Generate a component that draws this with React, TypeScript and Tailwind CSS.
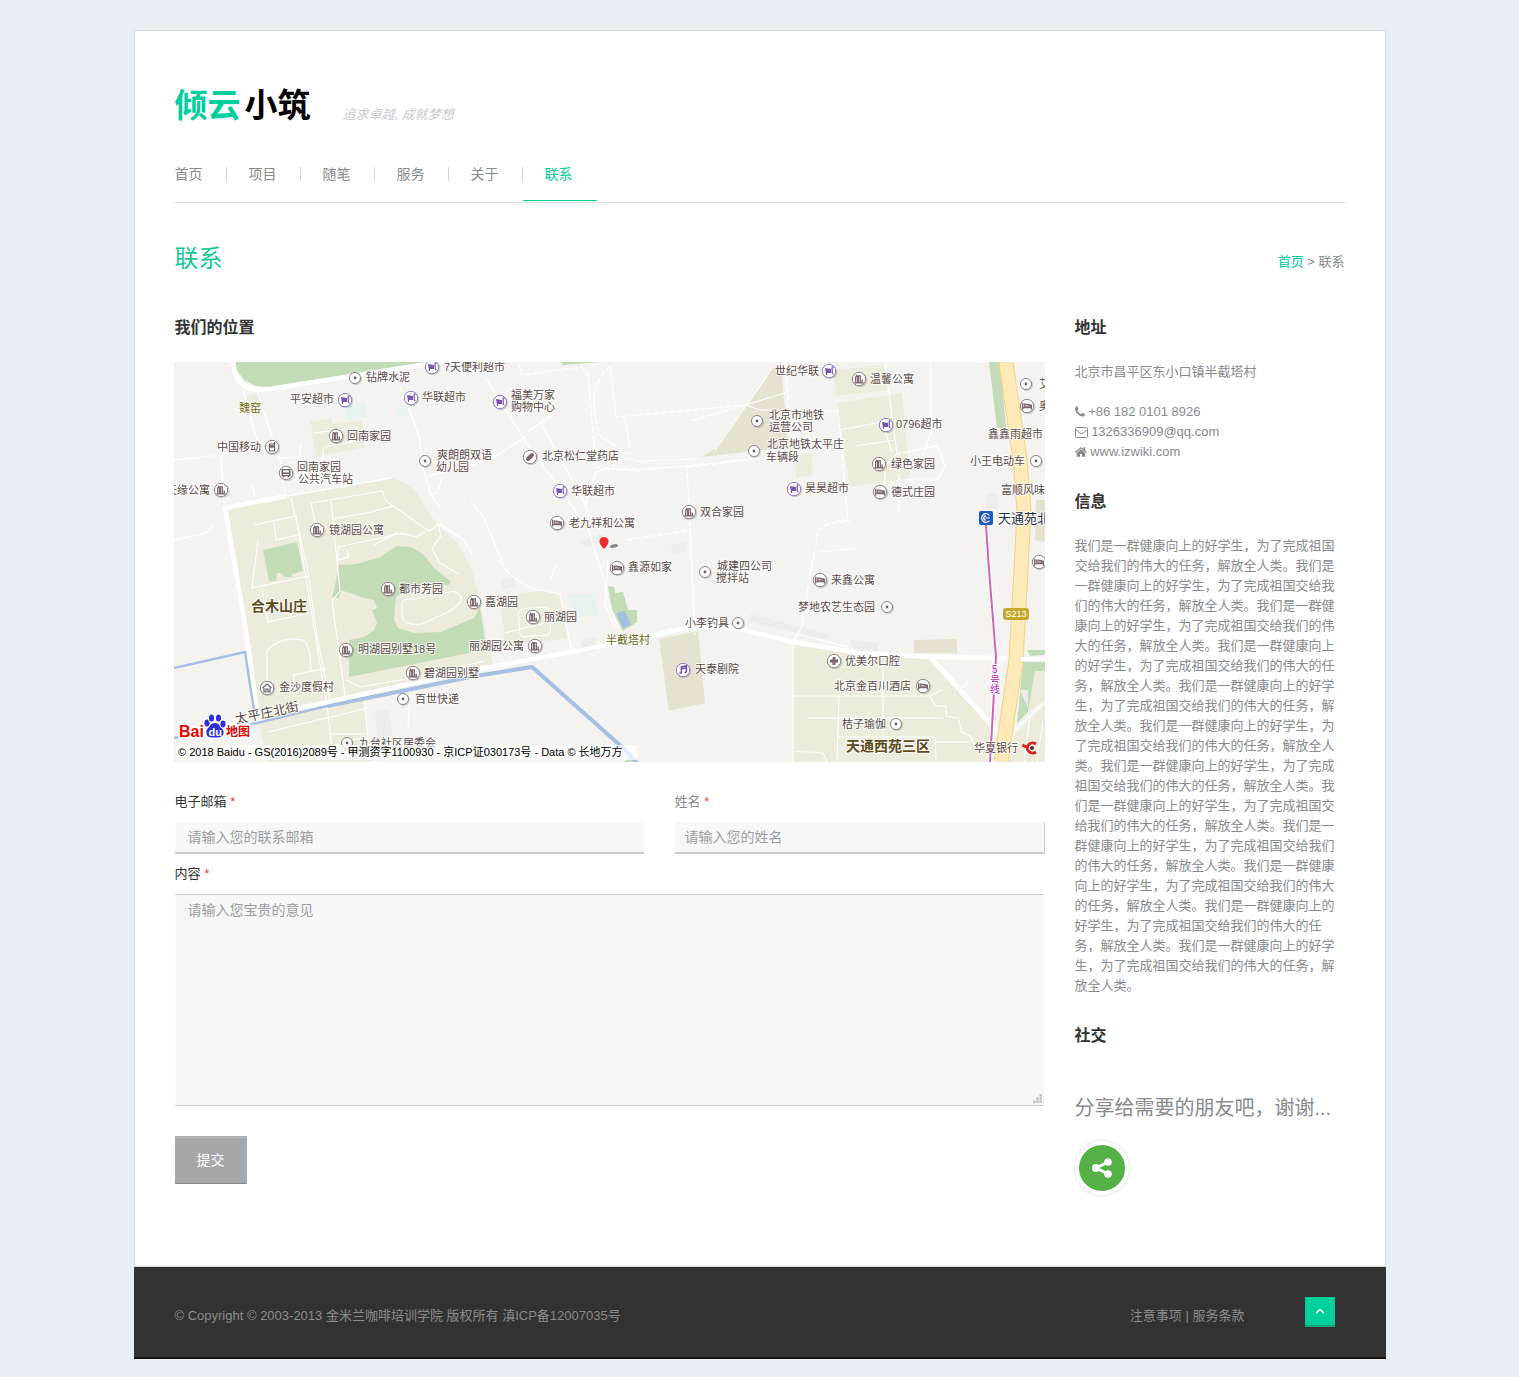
import React from "react";

type IconKind = "dot" | "cart" | "home" | "flat" | "bed" | "phone" | "bus" | "pill" | "music" | "plus";

type Place = {
  kind?: IconKind;
  at?: [number, number];
  lines: [number, number, string][];
};

const places: Place[] = [
  { kind: "dot", at: [355, 378], lines: [[366, 377, "钻牌水泥"]] },
  { kind: "cart", at: [432, 367], lines: [[444, 367, "7天便利超市"]] },
  { kind: "cart", at: [345, 400], lines: [[290, 399, "平安超市"]] },
  { kind: "cart", at: [411, 398], lines: [[422, 397, "华联超市"]] },
  { kind: "cart", at: [500, 402], lines: [[511, 395, "福美万家"], [511, 407, "购物中心"]] },
  { kind: "flat", at: [336, 436], lines: [[347, 436, "回南家园"]] },
  { kind: "phone", at: [272, 447], lines: [[217, 447, "中国移动"]] },
  { kind: "bus", at: [286, 473], lines: [[297, 467, "回南家园"], [298, 479, "公共汽车站"]] },
  { kind: "flat", at: [221, 490], lines: [[166, 490, "天缘公寓"]] },
  { kind: "flat", at: [317, 530], lines: [[329, 530, "镜湖园公寓"]] },
  { kind: "dot", at: [425, 461], lines: [[437, 455, "爽朗朗双语"], [436, 467, "幼儿园"]] },
  { kind: "pill", at: [530, 457], lines: [[542, 456, "北京松仁堂药店"]] },
  { kind: "cart", at: [560, 491], lines: [[571, 491, "华联超市"]] },
  { kind: "bed", at: [557, 523], lines: [[569, 523, "老九祥和公寓"]] },
  { kind: "flat", at: [689, 512], lines: [[700, 512, "双合家园"]] },
  { kind: "bed", at: [617, 568], lines: [[628, 567, "鑫源如家"]] },
  { kind: "dot", at: [705, 572], lines: [[717, 566, "城建四公司"], [716, 578, "搅拌站"]] },
  { kind: "cart", at: [829, 371], lines: [[775, 371, "世纪华联"]] },
  { kind: "flat", at: [859, 379], lines: [[870, 379, "温馨公寓"]] },
  { kind: "dot", at: [757, 421], lines: [[769, 415, "北京市地铁"], [769, 427, "运营公司"]] },
  { kind: "dot", at: [754, 451], lines: [[767, 444, "北京地铁太平庄"], [766, 457, "车辆段"]] },
  { kind: "cart", at: [886, 425], lines: [[896, 424, "0796超市"]] },
  { kind: "flat", at: [879, 464], lines: [[891, 464, "绿色家园"]] },
  { kind: "bed", at: [880, 492], lines: [[891, 492, "德式庄园"]] },
  { kind: "cart", at: [794, 489], lines: [[805, 488, "昊昊超市"]] },
  { kind: "dot", at: [1026, 384], lines: [[1039, 384, "艾"]] },
  { kind: "bed", at: [1027, 406], lines: [[1039, 406, "奥"]] },
  { lines: [[988, 434, "鑫鑫雨超市"]] },
  { kind: "dot", at: [1036, 461], lines: [[970, 461, "小王电动车"]] },
  { lines: [[1001, 490, "富顺风味"]] },
  { kind: "bed", at: [1039, 562], lines: [] },
  { kind: "bed", at: [820, 580], lines: [[831, 580, "来鑫公寓"]] },
  { kind: "dot", at: [887, 607], lines: [[798, 607, "梦地农艺生态园"]] },
  { kind: "flat", at: [474, 602], lines: [[485, 602, "嘉湖园"]] },
  { kind: "flat", at: [533, 617], lines: [[544, 617, "丽湖园"]] },
  { kind: "flat", at: [535, 646], lines: [[469, 646, "丽湖园公寓"]] },
  { kind: "flat", at: [388, 589], lines: [[399, 589, "都市芳园"]] },
  { kind: "flat", at: [346, 650], lines: [[358, 649, "明湖园别墅18号"]] },
  { kind: "flat", at: [413, 673], lines: [[424, 673, "碧湖园别墅"]] },
  { kind: "dot", at: [403, 699], lines: [[415, 699, "百世快递"]] },
  { kind: "home", at: [267, 688], lines: [[279, 687, "金沙度假村"]] },
  { kind: "dot", at: [347, 743], lines: [[359, 743, "九台社区居委会"]] },
  { kind: "dot", at: [738, 623], lines: [[685, 623, "小李钓具"]] },
  { kind: "music", at: [683, 670], lines: [[695, 669, "天泰剧院"]] },
  { kind: "plus", at: [834, 661], lines: [[845, 661, "优美尔口腔"]] },
  { kind: "bed", at: [923, 686], lines: [[834, 686, "北京金百川酒店"]] },
  { kind: "dot", at: [896, 724], lines: [[842, 724, "桔子瑜伽"]] },
  { lines: [[974, 748, "华夏银行"]] },
];

const glyphs: Record<IconKind, React.ReactNode> = {
  dot: <circle r="1.4" fill="#6e5f5f" />,
  cart: (
    <>
      <path d="M-4-3 2-2V2h-5.200z" fill="#7a55b5" />
      <path d="M4.600-3.800H3.200V2l1 1.200M-2.600 2v2" fill="none" stroke="#7a55b5" strokeWidth="1.200" />
    </>
  ),
  home: <path d="M-4.5 0 0-4l4.5 4M-3 0v4h2V1h2v3h2V0" fill="none" stroke="#6e5f5f" strokeWidth="1.2" />,
  flat: <path d="M-4.5 3.8h9M-3.3 3.8v-5.6l1-1.6 1 1.6v5.6M-.7 3.8v-7h2v7M3.2 3.8V.4" fill="none" stroke="#7c6566" strokeWidth="1.3" />,
  bed: <path d="M-4.4-3.2v6.600M-4.400 1.600h8.800M4.400 3.400v-4.200l-5-1h-2v2h7" fill="none" stroke="#7c6566" strokeWidth="1.3" />,
  phone: <path d="M-2.6-3h5.2v7h-5.2zM2.6-3v-2M-1.2-1.4h2.4v1.6h-2.4z" fill="none" stroke="#6e5f5f" strokeWidth="1.2" />,
  bus: <path d="M-3.8-3.4h7.6v6h-7.6zM-3.8.2h7.6M-2.6 2.6v1.6M2.6 2.6v1.6" fill="none" stroke="#6e5f5f" strokeWidth="1.4" />,
  pill: <path d="M-2 2 2-2" stroke="#7c6566" strokeWidth="4" strokeLinecap="round" />,
  music: <path d="M-1.6 3.2v-6.4L3.4-4v6.2M-1.6-1.2l5-.8M-3.6 3.2h2M1.6 2.4h1.8" fill="none" stroke="#6c4cb4" strokeWidth="1.5" />,
  plus: <path d="M-4 0h8M0-4v8" stroke="#7c6566" strokeWidth="2.8" />,
};

function Marker({ kind, x, y }: { kind: IconKind; x: number; y: number }) {
  const violet = kind === "cart" || kind === "music";
  const r = kind === "dot" ? 5.5 : 6.7;
  return (
    <g transform={`translate(${x} ${y})`}>
      <circle cx="1" cy="1" r={r + 0.6} fill="#00000026" />
      <circle r={r} fill="#fff" stroke={violet ? "#8d7cc0" : "#8c8380"} strokeWidth="1" />
      {glyphs[kind]}
    </g>
  );
}

function LocationMap() {
  return (
    <svg
      role="img"
      aria-label="我们的位置"
      viewBox="174 362 871 400"
      preserveAspectRatio="xMidYMid slice"
      className="mt-6 -ml-px block h-[400px] w-[calc(100%+1px)] bg-[#f4f3f0] font-['Liberation_Sans','Noto_Sans_CJK_SC',sans-serif] text-[11px]"
    >
      <rect x="174" y="362" width="871" height="400" fill="#f4f3f0" />

      <g fill="#ecebdc">
        <path d="M226 508 289 495 391 478 404 482 416 492 437 525 457 542 472 570 480 600 493 668 364 697 371 762 268 762 257 715 234 560z" />
        <path d="M310 422 331 418 332 424 362 420 365 447 316 457z" />
        <path d="M246 396 259 393 263 418 250 410z" />
        <path d="M500 597 547 590 560 595 567 638 505 648z" />
        <path d="M833 370 885 364 887 390 836 396zM837 403 902 393 910 478 850 487zM794 457 811 453 812 475 796 478z" />
        <path d="M793 645 860 655 930 657 992 728 990 762 793 762zM1010 740 1045 705V762H1008z" />
        <path d="M1035 671h10v29l-17 12z" />
      </g>
      <g fill="#e5e2d0">
        <path d="M773 368 781 364 788 446 770 449 702 457 715 448z" />
        <path d="M659 639 698 631 705 703 669 711zM914 640 957 639V653H914zM1036 500h9v42l-10-2z" />
      </g>
      <g fill="#c2dcb8">
        <path d="M235 362 237 370 244 380 256 386 271 387 420 364 426 362z" />
        <path d="M263 550 297 542 303 571 292 574 291 577 284 577 282 573 277 573 276 581 269 581z" />
        <path d="M339 565 356 564 381 557 396 546 411 547 424 555 434 568 451 582 449 585 427 585 407 590 396 597 394 620 398 628 414 633 441 632 474 618 480 608 485 640 484 650 349 677V640L364 637 374 630 377 623 372 610 377 608 374 600 361 597 341 590 339 598 332 597 334 590z" />
        <path d="M608 586 614 587 615 593 623 592 628 610 637 610V622L623 631 612 610zM624 762l5-6 8 6zM561 362h38l-36 3z" />
        <path d="M989 362 1000 362 1006 428 997 428zM1027 650h18v5l-15 1zM1023 662h22v9h-10l-7 41-11 11z" />
      </g>
      <g fill="#e8f3f0">
        <path d="M346 406 365 402 367 417 347 421zM396 407 409 405 409 415 397 417zM567 595 595 593 598 615 577 617z" />
      </g>
      <g fill="#edecea">
        <path d="M500 580l14-2 2 8-12 3zM580 543l20-9 4 6-16 7zM670 545l16-3v10l-15 2zM582 640l14-3 2 14-17 3zM375 712l14-2 3 25-14 2zM986 494h12v15h-12zM1020 690h8v18z" />
        <path d="M750 614l78 20-2 6-76-18zM850 640l28 3v9h-24z" />
      </g>
      <path d="M616 613 625 611 631 625 623 628z" fill="#a3bfe2" />

      <g fill="none" stroke="#fff" strokeWidth="1.1">
        <path d="M243 390 257 440M257 391 273 440 280 460 285 495M174 460 222 455 240 442M221 458l3 46M252 484l3 14M281 458l18-1 2-14M314 433l44-6M323 492v-40q0-6 6-6l36-6" />
        <path d="M400 386 420 438 421 462 430 492 441 510M428 476l47-12 25-10 26-18M485 377l42 67 60 82 16 50 5 24 10 28M541 423l45 82M596 471l-11 35 8 16M527 432l27-18M174 540l32-7 8-8M429 496l9-4 4-15" />
        <path d="M311 503l71-12 4 10 43 30 10-7 25 16 8 14M311 503l6 30-8-2M331 501l9 90-8 10 13 95M338 547l52-11 12-3 14 4 9-5M338 547v13l11-3-2-7M333 519l38-7 22-6M438 524l3 12-9 12 7 14 19 12M374 545l22-12 12 2" />
        <path d="M254 525l42-9 8 50 24 147M274 522l2 18 22-5M258 540l-6 48 56-12M262 590l6 32 46-10M267 688V650q14-14 36-10 8 5 8 32M294 688v-13l33-7M291 498l16 68 10 70 14 70M327 704l6 56M364 697l6 63M268 732l100-24M318 750l50-14M330 734h36M410 690l-2 38M346 680l14 7 52-9 73-17" />
        <path d="M498 560l14 16 18 12 30 6 12 58M556 564l-6 16M470 500l14 18 22 54M505 633l40-10M402 604q0-6 8-4l44-9q16 8-4 20l-28 13q-20 2-20-10zM608 560l-3 44 10 24" />
        <rect x="519" y="608" width="31" height="28" rx="5" transform="rotate(-4 534 622)" />
        <path d="M746 405 788 392 M746 405l14 5 26 0M715 450 770 372M793 642l9-16 10-66M798 634l50 13M793 642V762M808 718h135M793 696h137l6 10 10 0 0 10 12 2 4 14 8 4 8 16M839 696l-2 64M883 663v74M838 737h97l1 23M936 742h33M930 696l12-6M793 751l30 2 4 9M840 430l42-8 10 30M855 446l40-6M885 364l12 90-12 12v20M931 362v70l-8 24M897 454l40-8 8 20-8 14h-30M963 688l6-8M1015 730l30-28M1024 762l6-46M1037 762l6-40" />
      </g>
      <g fill="none" stroke="#fff" strokeWidth="1.200" strokeDasharray="6 2">
        <path d="M518 362l4 13 60-8 6 8 8 92 40 4 156-16M610 366l6 51 130-12-56 16M625 418l6 40-34 14M610 366q-20 20-15 45l4 24 30 20M687 465l8 170M626 540l66-10M600 470l100-4 85-12M786 362l3 60M788 418l50-8 10 110-12 1M812 570l6-40 10-6 22-3M820 552l38-4M899 512v-60M620 457l18 4 60-2" />
      </g>
      <g fill="none" stroke="#fff" strokeLinejoin="round">
        <path d="M233 360q0 30 30 30L421 365l30-5" strokeWidth="4.5" />
        <path d="M287 496 225 508l9 52 12 70 11 80 4 14" strokeWidth="4.5" />
        <path d="M287 496 391 478" strokeWidth="1.5" />
      </g>
      <g fill="none" stroke="#a5c0e2">
        <path d="M174 668 245 652 254 710" strokeWidth="2.4" />
        <path d="M174 738 257 723 327 706" strokeWidth="2.4" />
        <path d="M327 706 407 690 470 677 532 667 622 747 638 764" strokeWidth="4" />
      </g>
      <path d="M296 709 474 670 603 646 687 628Q710 624 743 630L793 642 860 653 930 657 1006 658" fill="none" stroke="#fff" strokeWidth="4.500" strokeLinejoin="round" />
      <path d="M930 657 998 732" stroke="#fff" strokeWidth="5" />
      <g fill="none">
        <path d="M1006 362 1020 460 1024 510 1021 570 1016 660 1001 762" stroke="#f3d089" strokeWidth="15" />
        <path d="M1006 362 1020 460 1024 510 1021 570 1016 660 1001 762" stroke="#fee9b8" strokeWidth="13" />
        <path d="M1021 659h24" stroke="#fff" strokeWidth="4" />
        <path d="M986 525 989 570 996 657 990 762" stroke="#fff" strokeWidth="4" />
        <path d="M986 525 989 570 996 657 990 762" stroke="#c868b4" strokeWidth="2" />
      </g>

      <g fill="#5a4a46" stroke="#ffffffcc" strokeWidth="2" paintOrder="stroke" strokeLinejoin="round">
        {places.flatMap((p) =>
          p.lines.map(([x, y, t]) => (
            <text key={`${x}-${y}`} x={x} y={y + 4}>
              {t}
            </text>
          ))
        )}
        <text x="236" y="724" transform="rotate(-12 236 724)" fontSize="13">太平庄北街</text>
        <g fill="#6b6b12">
          <text x="239" y="412">魏窑</text>
          <text x="606" y="644">半截塔村</text>
        </g>
        <g fill="#5e4a1c" fontSize="14" fontWeight="700">
          <text x="251" y="611">合木山庄</text>
          <text x="846" y="751">天通西苑三区</text>
        </g>
        <text x="998" y="523" fontSize="13" fill="#1c2f4c">天通苑北</text>
        <g fill="#b32bb3">
          <text x="992" y="673" fontSize="10">5</text>
          <text x="990" y="684" fontSize="10">号</text>
          <text x="990" y="693" fontSize="10">线</text>
        </g>
      </g>
      {places.map((p) => p.kind && p.at && <Marker key={p.at.join()} kind={p.kind} x={p.at[0]} y={p.at[1]} />)}

      <rect x="979" y="511" width="14" height="14" rx="2" fill="#1f56c0" />
      <path d="M989.5 515.5A4.3 4.3 0 1 0 989.5 520.5M990 518h-4.500M986 515.800a2.200 2.200 0 1 0 0 4.400" fill="none" stroke="#fff" strokeWidth="1.2" />
      <rect x="1003" y="608" width="26" height="12" rx="3" fill="#c3a92b" />
      <text x="1016" y="617" textAnchor="middle" fontSize="9" fill="#fff">S213</text>
      <path d="M1022.500 745q3.500 2.500 6 1.500m7.500-2.500a5.500 5 0 1 0 0 8" fill="none" stroke="#d81e1e" strokeWidth="2.800" />
      <circle cx="1032" cy="748" r="2" fill="#4c2b2b" />

      <ellipse cx="614" cy="546" rx="4" ry="1.800" fill="#8c8c8c" transform="rotate(-10 614 546)" />
      <path d="M604 549q-5-5-4.500-8a4.500 4 0 0 1 9 0q.5 3-4.500 8z" fill="#ec2d2d" />

      <g stroke="#fff" strokeWidth="4" paintOrder="stroke" strokeLinejoin="round">
        <g fill="#e10602" fontWeight="700">
          <text x="179" y="737" fontSize="16">Bai</text>
          <text x="226" y="736" fontSize="12">地图</text>
        </g>
        <path d="M215 723q4 0 6 4 4 4 2 8-2 3-8 2.500-6 .5-8-2-2-5 2-8.500 2-4 6-4z" fill="#2f2fdc" strokeWidth="3" />
        <g fill="#2f2fdc" strokeWidth="2">
          <ellipse cx="207" cy="723" rx="2.600" ry="3.400" />
          <ellipse cx="211.500" cy="718" rx="2.600" ry="3.600" />
          <ellipse cx="218.500" cy="718" rx="2.600" ry="3.600" />
          <ellipse cx="223" cy="724" rx="2.600" ry="3.400" />
        </g>
      </g>
      <text x="208.500" y="736" fontSize="11" fontWeight="700" fill="#fff">du</text>
      <rect x="176" y="745" width="461" height="15" fill="#ffffffb3" />
      <text x="178" y="756" fill="#000">
        © 2018 Baidu - GS(2016)2089号 - 甲测资字1100930 - 京ICP证030173号 - Data © 长地万方
      </text>
    </svg>
  );
}

const menu = ["首页", "项目", "随笔", "服务", "关于"];
const sentence = "我们是一群健康向上的好学生，为了完成祖国交给我们的伟大的任务，解放全人类。";

function Heading({ children }: { children: React.ReactNode }) {
  return <h2 className="text-base leading-5 font-bold text-[#333]">{children}</h2>;
}

function Required() {
  return <span className="text-[#ff3b30]">*</span>;
}

export default function App() {
  return (
    <div className="bg-[#e8eef1] pt-[30px] pb-[18px] font-['Liberation_Sans','Noto_Sans_CJK_SC',sans-serif] text-[13px] leading-5 text-[#888b8d]">
      <div className="mx-auto max-w-[1252px]">
        <div className="border border-[#d6dbde] bg-white px-10 pt-[60px] pb-[71px]">
          <header>
            <div className="flex items-end gap-8">
              <a href="#" className="flex gap-1 text-[33px] leading-[30px] font-bold text-black">
                <span className="text-[#00cf9e]">倾云</span>
                <span>小筑</span>
              </a>
              <p className="leading-3 text-[#c8cccf] italic">追求卓越, 成就梦想</p>
            </div>
            <nav className="mt-[46px] border-b border-[#dcdedf] pb-px text-sm leading-[14px]">
              <ul className="flex items-start">
                {menu.map((item) => (
                  <li key={item} className="border-r border-[#d6dadd] pr-[23px] pl-[22px] first:pl-0">
                    <a href="#">{item}</a>
                  </li>
                ))}
                <li className="border-b border-[#00cf9e] pr-6 pb-[19px] pl-[22px] text-[#00cb99]">
                  <a href="#" aria-current="page">联系</a>
                </li>
              </ul>
            </nav>
          </header>

          <div className="mt-[41px] flex items-end justify-between">
            <h1 className="text-2xl leading-[30px] text-[#10ca98]">联系</h1>
            <p className="leading-6">
              <a href="#" className="text-[#00cb99]">首页</a> &gt; 联系
            </p>
          </div>

          <div className="mt-11 grid grid-cols-[minmax(0,1fr)_270px] gap-[30px]">
            <main>
              <Heading>我们的位置</Heading>
              <LocationMap />
              <form className="mt-[30px]" onSubmit={(e) => e.preventDefault()}>
                <div className="grid grid-cols-[47fr_37fr] gap-[30px]">
                  <div className="pr-px">
                    <label htmlFor="email" className="block text-[#333]">电子邮箱 <Required /></label>
                    <input id="email" type="email" placeholder="请输入您的联系邮箱" className="mt-2.5 block h-8 w-full border-b-2 border-[#caccce] bg-[#f5f7f9] px-[13px] text-sm placeholder:text-[#9c9ea0]" />
                  </div>
                  <div>
                    <label htmlFor="name" className="block">姓名 <Required /></label>
                    <input id="name" type="text" placeholder="请输入您的姓名" className="mt-2.5 block h-8 w-full border-r border-b-2 border-[#caccce] bg-[#f5f7f9] px-2.5 text-sm placeholder:text-[#9c9ea0]" />
                  </div>
                </div>
                <label htmlFor="message" className="mt-2.5 block text-[#333]">内容 <Required /></label>
                <div className="relative mt-2.5 mr-px">
                  <textarea id="message" placeholder="请输入您宝贵的意见" className="block h-[212px] w-full resize-none border-y border-[#caccce] bg-[#f5f7f9] px-[13px] py-[5px] text-sm placeholder:text-[#9c9ea0]" />
                  <svg viewBox="0 0 9 9" className="pointer-events-none absolute right-0.5 bottom-[3px] size-[9px]" fill="#c0c2c4" aria-hidden="true">
                    <path d="M6.500 0H9v2.500H6.500zM3.200 3.200h2.500v2.500H3.200zM6.500 3.200H9v2.500H6.500zM0 6.500h2.500V9H0zM3.200 6.500h2.500V9H3.200zM6.500 6.500H9V9H6.500z" />
                  </svg>
                </div>
                <button type="submit" className="mt-[30px] block h-12 border-t border-b border-t-[#abafb2] border-b-[#85888a] bg-[#a4a8ab] px-[22px] text-sm text-white shadow-[inset_0_1px_0_#b6b9bb]">
                  提交
                </button>
              </form>
            </main>

            <aside>
              <Heading>地址</Heading>
              <address className="mt-6 not-italic">
                <p>北京市昌平区东小口镇半截塔村</p>
                <p className="mt-5">
                  <svg viewBox="192 128 1408 1536" className="inline h-3 w-[10px] align-[-2px]" fill="currentColor" aria-hidden="true">
                    <path d="M1600 1240q0 27-10 70.500t-21 68.500q-21 50-122 106-94 51-186 51-27 0-53-3.500t-57.500-12.500-47-14.500-55.500-20.500-49-18q-98-35-175-83-127-79-264-216t-216-264q-48-77-83-175-3-9-18-49t-20.500-55.500-14.500-47-12.500-57.500-3.500-53q0-92 51-186 56-101 106-122 25-11 68.500-21t70.500-10q14 0 21 3 18 6 53 76 11 19 30 54t35 63.500 31 53.500q3 4 17.500 25t21.500 35.500 7 28.500q0 20-28.500 50t-62 55-62 53-28.500 46q0 9 5 22.500t8.500 20.500 14 24 11.500 19q76 137 174 235t235 174q2 1 19 11.500t24 14 20.500 8.500 22.500 5q18 0 46-28.500t53-62 55-62 50-28.500q14 0 28.500 7t35.500 21.500 25 17.500q25 15 53.500 31t63.500 35 54 30q70 35 76 53 3 7 3 21z" />
                  </svg>{" "}
                  +86 182 0101 8926
                </p>
                <p>
                  <svg viewBox="0 0 13 11" className="inline h-[11px] w-[13px] align-[-2px]" fill="none" stroke="currentColor" aria-hidden="true">
                    <rect x=".5" y=".5" width="12" height="10" rx="1" />
                    <path d="M.5 2.500 5 6.200q1.500 1.200 3 0L12.500 2.500" />
                  </svg>{" "}
                  1326336909@qq.com
                </p>
                <p>
                  <svg viewBox="90 250 1612 1290" className="inline h-[10px] w-3 align-[-1px]" fill="currentColor" aria-hidden="true">
                    <path d="M1472 992v480q0 26-19 45t-45 19h-384v-384h-256v384h-384q-26 0-45-19t-19-45v-480q0-1 .5-3t.5-3l575-474 575 474q1 2 1 6zm223-69l-62 74q-8 9-21 11h-3q-13 0-21-7l-692-577-692 577q-12 8-24 7-13-2-21-11l-62-74q-8-10-7-23.500t11-21.500l719-599q32-26 76-26t76 26l244 204v-195q0-14 9-23t23-9h192q14 0 23 9t9 23v408l219 182q10 8 11 21.500t-7 23.500z" />
                  </svg>{" "}
                  www.izwiki.com
                </p>
              </address>
              <div className="mt-[30px]">
                <Heading>信息</Heading>
                <p className="mt-6">{sentence.repeat(12)}</p>
              </div>
              <div className="mt-[30px]">
                <Heading>社交</Heading>
                <p className="mt-[47px] text-xl leading-[30px]">分享给需要的朋友吧，谢谢...</p>
                <button type="button" aria-label="分享" className="mt-[18px] flex size-[54px] items-center justify-center rounded-full border-4 border-white bg-[#55b046] shadow-[0_0_4px_rgba(0,0,0,0.15)]">
                  <svg viewBox="0 0 20 20" className="size-5" fill="#fff" aria-hidden="true">
                    <path d="M4 10 16 4M4 10l12 6" stroke="#fff" strokeWidth="2.800" />
                    <circle cx="4" cy="10" r="4" />
                    <circle cx="16" cy="4" r="3.800" />
                    <circle cx="16" cy="16" r="3.800" />
                  </svg>
                </button>
              </div>
            </aside>
          </div>
        </div>

        <footer className="flex items-center border-b-2 border-[#111] bg-[#323232] pt-[30px] pr-[51px] pb-[30px] pl-[41px] text-[#8c8c8c]">
          <p className="mt-2">© Copyright © 2003-2013 金米兰咖啡培训学院 版权所有 滇ICP备12007035号</p>
          <p className="mt-2 ml-auto">
            <a href="#">注意事项</a> | <a href="#">服务条款</a>
          </p>
          <button type="button" aria-label="返回顶部" className="ml-[60px] flex size-[30px] items-center justify-center border-b-2 border-[#0aa882] bg-[#00cf9e]">
            <svg viewBox="0 0 10 6" className="h-1.5 w-2.5" fill="none" stroke="#fff" strokeWidth="1.500" aria-hidden="true">
              <path d="M1 5.200 5 1.200l4 4" />
            </svg>
          </button>
        </footer>
      </div>
    </div>
  );
}
